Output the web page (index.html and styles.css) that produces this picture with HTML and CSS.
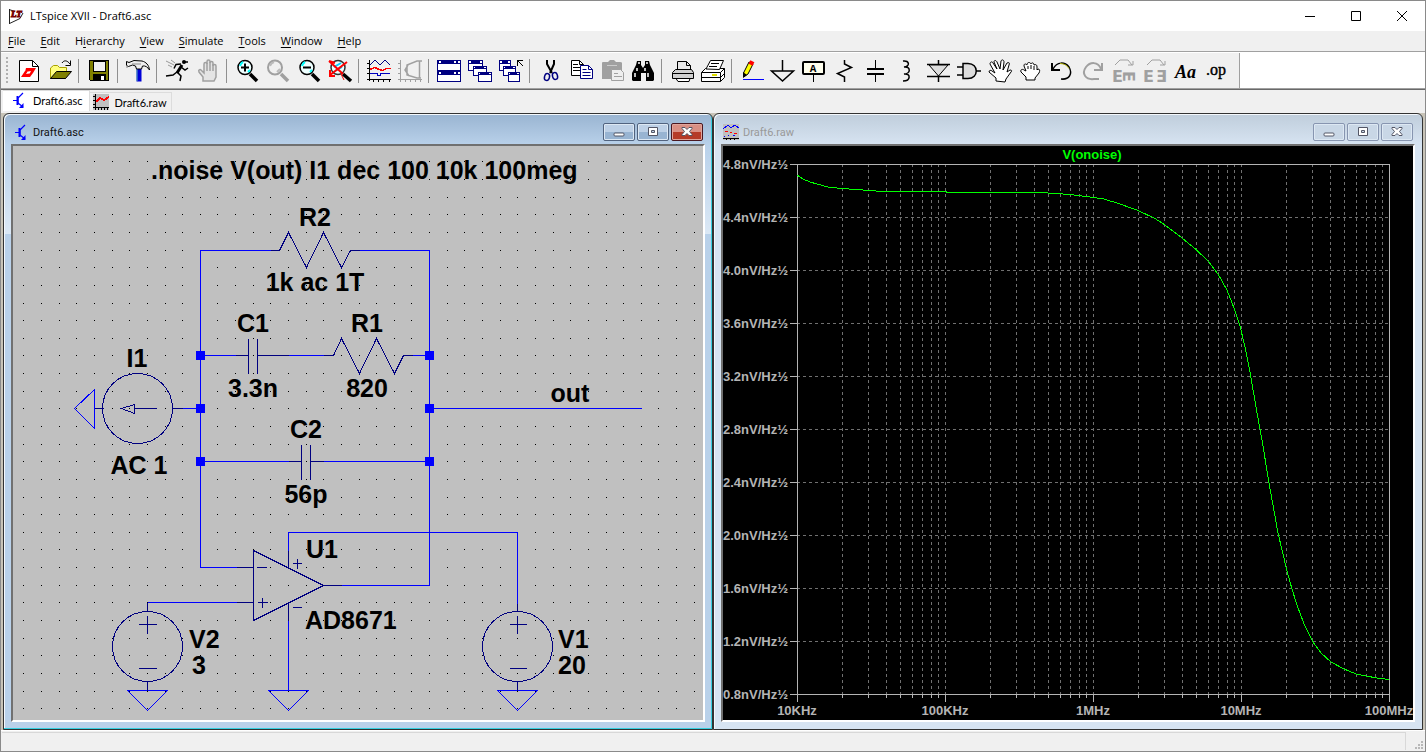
FILE: index.html
```html
<!DOCTYPE html>
<html lang="en">
<head>
    <meta charset="UTF-8">
    <title>LTspice XVII - Draft6.asc</title>
    <link rel="stylesheet" href="styles.css">
</head>
<body>
    <header class="titlebar">
        <svg class="app-icon" width="17" height="17" viewBox="0 0 17 17">
            <path d="M1.500 1v15L13 10.500 16 .5z" fill="#fff"/>
            <path d="M1.500 1v15M1.500 15.500 12 10.500 15 5M1 1.500l6 2" stroke="#222" fill="none"/>
            <text x="3" y="9" class="logo-text">LT</text>
        </svg>
        <h1>LTspice XVII - Draft6.asc</h1>
        <div class="sys-buttons">
            <button aria-label="Minimize"><svg width="10" height="10"><path d="M0 5.500h10" stroke="#000"/></svg></button>
            <button aria-label="Maximize"><svg width="10" height="10"><path d="M.5.5h9v9h-9z" fill="none" stroke="#000"/></svg></button>
            <button aria-label="Close"><svg width="10" height="10"><path d="M0 0l10 10M10 0 0 10" stroke="#000"/></svg></button>
        </div>
    </header>

    <nav class="menubar">
        <button><u>F</u>ile</button>
        <button><u>E</u>dit</button>
        <button>H<u>i</u>erarchy</button>
        <button><u>V</u>iew</button>
        <button><u>S</u>imulate</button>
        <button><u>T</u>ools</button>
        <button><u>W</u>indow</button>
        <button><u>H</u>elp</button>
    </nav>

    <div class="toolbar-row">
        <div class="toolbar">
            <div class="grip"></div>
            <button aria-label="New Schematic"><svg viewBox="0 0 24 24">
                <path d="M2.500 1.500h13l6 6v15h-19z" fill="#fff" stroke="#000"/>
                <path d="M15.500 1.500v6h6" fill="none" stroke="#000"/>
                <path d="M9 9h10l-3 5-4 2 2-4-6 1zM4 18l4-6h3l-2 3 7-1-3 4z" fill="#f00"/>
            </svg></button>
            <button aria-label="Open"><svg viewBox="0 0 24 24">
                <path d="M2.500 19V9l3-2.500h4l2 2h7v4" fill="#ffff80" stroke="#a8a000"/>
                <path d="M2.500 19.500 8.500 12.500h15l-6 7z" fill="#808000" stroke="#000"/>
                <path d="M14 4c2-3 5-3 8 1M22.500 1.500v5h-5" fill="none" stroke="#000"/>
                <path d="M2.500 19.500h15" stroke="#000"/>
            </svg></button>
            <span class="sep"></span>
            <button aria-label="Save"><svg viewBox="0 0 24 24" class="crisp">
                <path d="M2.500 1.500h19v20h-18l-1-1z" fill="#808000" stroke="#000"/>
                <path d="M6 2h12v10H6z" fill="#f0f0f0" stroke="#000"/>
                <path d="M6 15h13v7H6z"/><path d="M14 17h3v4h-3z" fill="#fff"/>
            </svg></button>
            <span class="sep"></span>
            <button aria-label="Control Panel"><svg viewBox="0 0 24 24">
                <path d="M10.500 9h5v13.500h-5z" fill="#0000d8"/><path d="M11 10v12" stroke="#5ab"/>
                <path d="M.5 2.500 3 3.500l5-2 8 .5c4 1 7 4 7.500 9-2-3-4-4.500-7-4l-1 3h-5l-1-3-3-1-4 1.500-2-1z" fill="#eee" stroke="#000"/>
                <path d="M1 6v3M6 5h9" stroke="#888"/>
            </svg></button>
            <span class="sep"></span>
            <button aria-label="Run"><svg viewBox="0 0 24 24">
                <circle cx="19" cy="3" r="2"/>
                <path d="M17 6 12 14" stroke="#000" stroke-width="3" fill="none"/>
                <path d="M16 5l-5 .5-2 4M12 13l-4 3-7 1M12 13l4 4-1 5M16 8l4 3 3-2M19 3h4" stroke="#000" stroke-width="1.500" fill="none"/>
                <path d="M1 2l8 4M3 6l4 2M6 1l4 3" stroke="#999" fill="none"/>
            </svg></button>
            <button aria-label="Halt"><svg viewBox="0 0 24 24">
                <path d="M7 22v-4l-4-5c-1-2 1-3 2-2l3 3V5c0-2 3-2 3 0V2.500c0-2 3-2 3 0V4c0-2 3-2 3 0v3c0-2 3-2 3 0v11l-2 4z" fill="#e4e4e4" stroke="#a0a0a0" stroke-width="1.500"/>
                <path d="M11 4v8M14 3v9M17 5v7" stroke="#a0a0a0" stroke-width="1.500"/>
            </svg></button>
            <span class="sep"></span>
            <button aria-label="Zoom In"><svg viewBox="0 0 24 24">
                <path d="M15 15l7 7" stroke="#000" stroke-width="3.500"/>
                <circle cx="10" cy="8.500" r="7" fill="#eff" stroke="#000" stroke-width="1.500"/>
                <path d="M5 7q1-3 3-4M13 13l2-2" stroke="#0ff" stroke-width="2" fill="none"/>
                <path d="M6 8.500h8M10 4.500v8" stroke="#000" stroke-width="2"/>
            </svg></button>
            <button aria-label="Pan"><svg viewBox="0 0 24 24">
                <path d="M15 15l7 7" stroke="#a0a0a0" stroke-width="3.500"/>
                <circle cx="9" cy="8.500" r="7" fill="none" stroke="#a0a0a0" stroke-width="2"/>
                <path d="M4 7q1-3 4-4M11 13l3-3" stroke="#bbb" stroke-width="2" fill="none"/>
            </svg></button>
            <button aria-label="Zoom Out"><svg viewBox="0 0 24 24">
                <path d="M15 15l7 7" stroke="#000" stroke-width="3.500"/>
                <circle cx="10" cy="8.500" r="7" fill="#eff" stroke="#000" stroke-width="1.500"/>
                <path d="M5 7q1-3 3-4M13 13l2-2" stroke="#0ff" stroke-width="2" fill="none"/>
                <path d="M6 8.500h8" stroke="#000" stroke-width="2"/>
            </svg></button>
            <button aria-label="Zoom to Fit"><svg viewBox="0 0 24 24">
                <path d="M15 15l8 7" stroke="#000" stroke-width="3.500"/>
                <circle cx="10" cy="8.500" r="7" fill="#eff" stroke="#333" stroke-width="1.500"/>
                <path d="M6 8l7-4M7 12l7-4" stroke="#0cf" stroke-width="2"/>
                <path d="M1 2l14 13M1 2l6 2M19 3 2 16M2 11v6h5" stroke="#f00" stroke-width="2" fill="none"/>
                <path d="M13 15l3 6" stroke="#f00"/>
            </svg></button>
            <span class="sep"></span>
            <button aria-label="Autorange"><svg viewBox="0 0 24 24" class="crisp">
                <path d="M2.500 1v21M0 20.500h24M0 4.500h2M0 9.500h2M0 14.500h2M6.500 20v3M11.500 20v3M16.500 20v3M22.500 20v3" stroke="#000"/>
                <path d="M3 6l5-5 5 5 5-5 5 5" fill="none" stroke="#000080"/>
                <path d="M3 10.500l5-2 4 2 4 1 3-2h5" fill="none" stroke="#f00" stroke-width="1.500"/>
                <path d="M3 14.500h7v2h3v-2h10" fill="none" stroke="#0000c0"/>
            </svg></button>
            <button aria-label="Smith Chart"><svg viewBox="0 0 24 24">
                <path d="M2.500 1v22M0 20.500h24M0 4.500h2M0 9.500h2M0 14.500h2M7.500 20v3M12.500 20v3M17.500 20v3M22.500 20v3" stroke="#a0a0a0"/>
                <path d="M21.500 2v17M24 2h-5L9 6v10l10 3h4M10 6l-3 5 4 6" fill="none" stroke="#a0a0a0" stroke-width="1.500"/>
            </svg></button>
            <span class="sep"></span>
            <button aria-label="Tile Windows"><svg viewBox="0 0 24 24" class="crisp">
                <path d="M.5 1.500h23v10H.5zM.5 12.500h23v10H.5z" fill="#fff" stroke="#000080"/>
                <path d="M1 1h23v4H1zM1 12h23v4H1z" fill="#000080"/>
                <path d="M2 2h2v2H2zM17 2h2v2h-2zM21 2h2v2h-2zM2 13h2v2H2zM17 13h2v2h-2zM21 13h2v2h-2z" fill="#fff"/>
            </svg></button>
            <button aria-label="Cascade Windows"><svg viewBox="0 0 24 24" class="crisp">
                <g fill="#fff" stroke="#000080"><path d="M.5 1.500h14v10H.5z"/><path d="M5.500 7.500h13v9h-13z"/><path d="M10.500 13.500h13v9h-13z"/></g>
                <path d="M0 1h15v4H0zM5 7h14v3H5zM10 13h14v3H10z" fill="#000080"/>
                <path d="M1 2h2v2H1zM12 2h2v2h-2zM6 8h1v1H6zM16 8h2v1h-2zM11 14h1v1h-1zM21 14h2v1h-2z" fill="#fff"/>
            </svg></button>
            <button aria-label="Close All"><svg viewBox="0 0 24 24" class="crisp">
                <g fill="#fff" stroke="#000080"><path d="M.5 1.500h11v10H.5z"/><path d="M4.500 7.500h12v9h-12z"/><path d="M9.500 13.500h11v9h-11z"/></g>
                <path d="M0 1h12v4H0zM4 7h13v3H4zM9 13h12v3H9z" fill="#000080"/>
                <path d="M1 2h2v2H1zM9 2h2v2H9zM5 8h1v1H5zM14 8h2v1h-2zM10 14h1v1h-1zM18 14h2v1h-2z" fill="#fff"/>
                <path d="M18.500 7V1.500H24M19 2l5 5" stroke="#000" fill="none"/>
            </svg></button>
            <span class="sep"></span>
            <button aria-label="Cut"><svg viewBox="0 0 24 24">
                <path d="M9 1v4l5 9M16 1v4l-4 9" stroke="#000" stroke-width="2" fill="none"/>
                <ellipse cx="9" cy="18" rx="2.500" ry="3.500" fill="none" stroke="#000080" stroke-width="1.500" transform="rotate(15 9 18)"/>
                <ellipse cx="17" cy="17" rx="2.500" ry="3.500" fill="none" stroke="#000080" stroke-width="1.500" transform="rotate(-15 17 17)"/>
            </svg></button>
            <button aria-label="Copy"><svg viewBox="0 0 24 24">
                <path d="M2.500 1.500h8l4 4v11h-12z" fill="#fff" stroke="#000"/>
                <path d="M4 5.500h5M4 8.500h7M4 11.500h7M10.500 1.500v4h4" stroke="#000" fill="none"/>
                <path d="M11.500 6.500h8l4 4v9h-12z" fill="#fff" stroke="#000080"/>
                <path d="M13.500 10.500h4M13.500 13.500h8M13.500 16.500h8M19.500 6.500v4h4" stroke="#000080" fill="none"/>
            </svg></button>
            <button aria-label="Paste"><svg viewBox="0 0 24 24">
                <path d="M2 4q0-1 1-1h5l2-2h4l2 2h4q2 0 2 1v16H2z" fill="#a0a0a0"/>
                <path d="M7 6.500h10" stroke="#ccc"/>
                <path d="M11.500 10.500h9l3 3v8h-12z" fill="#eee" stroke="#a0a0a0"/>
                <path d="M14 14.500h4M14 17.500h8" stroke="#a0a0a0"/>
            </svg></button>
            <button aria-label="Find"><svg viewBox="0 0 24 24">
                <path d="M6 2h4v4l2 3 2-3V2h4l1 4 4 8v7l-1 1h-7v-8h-5v8H2l-1-1v-7l4-8z"/>
                <path d="M7 4h2M15 4h2M6 9v3M14 9v3M4 14v4M17 14v4" stroke="#fff" stroke-width="1.500"/>
            </svg></button>
            <span class="sep"></span>
            <button aria-label="Print"><svg viewBox="0 0 24 24">
                <path d="M7.500 11V2.500h9l4 4V11" fill="#e8e8e8" stroke="#000"/>
                <path d="M16.500 2.500v4h4" fill="none" stroke="#000"/>
                <path d="M2.500 13.500l3-3h16l2 3v6h-21z" fill="#d0d0d0" stroke="#000"/>
                <path d="M2.500 14.500h21M8 22.500h11l1-3H6z" stroke="#000" fill="#fff"/>
            </svg></button>
            <button aria-label="Print Setup"><svg viewBox="0 0 24 24">
                <path d="M.5 13.500l4-4h19v9l-4 4H.5z" fill="#fff" stroke="#000"/>
                <path d="M5 10 9.500 1.500h13l-4 9z" fill="#fff" stroke="#000"/>
                <path d="M10 4.500h8M8 7.500h8M.5 13.500h19v9M.5 18.500h19l4-4M19.500 13.500l4-4" stroke="#000" fill="none"/>
                <path d="M11 16h5" stroke="#dd0" stroke-width="2"/>
            </svg></button>
            <span class="sep"></span>
            <button aria-label="Draw Wire"><svg viewBox="0 0 24 24">
                <path d="M3.500 18V14L9 3l4 2-5 10z" fill="#ff0" stroke="#000"/>
                <path d="M9.500 3l4 2" stroke="#f00" stroke-width="4"/>
                <path d="M3 13l4 3-4 3z"/><path d="M3 20.500h21" stroke="#00f"/>
            </svg></button>
            <button aria-label="Ground"><svg viewBox="0 0 24 24">
                <path d="M11.500 1v11M.5 12h22L11.500 22z" fill="none" stroke="#000" stroke-width="1.500"/>
            </svg></button>
            <button aria-label="Label Net"><svg viewBox="0 0 24 24">
                <rect x="1" y="3" width="21" height="12" rx="1" fill="#ffe" stroke="#000" stroke-width="2"/>
                <path d="M11.500 16v7" stroke="#000"/>
                <text x="11" y="13" text-anchor="middle" class="icon-label">A</text>
            </svg></button>
            <button aria-label="Resistor"><svg viewBox="0 0 24 24">
                <path d="M11.500 1v4l7 3.500-14 6 7 3.500v5" fill="none" stroke="#000" stroke-width="1.500"/>
            </svg></button>
            <button aria-label="Capacitor"><svg viewBox="0 0 24 24" class="crisp">
                <path d="M11.500 1v8M11.500 15v8" stroke="#000"/><path d="M3 10h17M3 15h17" stroke="#000" stroke-width="2"/>
            </svg></button>
            <button aria-label="Inductor"><svg viewBox="0 0 24 24">
                <path d="M8 2c7-1 7 6 1 6 7-1 7 7 0 7 7-1 7 7-1 7" fill="none" stroke="#000" stroke-width="1.500"/>
            </svg></button>
            <button aria-label="Diode"><svg viewBox="0 0 24 24">
                <path d="M12.500 1v22M1 5.500h23M1 17.500h23" stroke="#000" stroke-width="1.500"/>
                <path d="M3 6h19l-9.500 11z" fill="#ddd" stroke="#000"/>
            </svg></button>
            <button aria-label="Component"><svg viewBox="0 0 24 24">
                <path d="M6 4.500h5c11 0 11 15 0 15H6z" fill="#ddd" stroke="#000" stroke-width="1.500"/>
                <path d="M0 8h6M0 16h6M19 12h5" stroke="#000" stroke-width="1.500"/>
            </svg></button>
            <button aria-label="Move"><svg viewBox="0 0 24 24">
                <path d="M8 22v-3l-7-6c0-2 2-2 3-1l3 2L2 5c0-2 2-3 3-1l4 6L6 3c0-2 2-2 3 0l3 7 1-8c1-2 3-1 3 1l-1 8 4-7c2-1 3 0 2 2l-2 7 3-2c2 0 2 1 1 2l-5 7-1 3z" fill="#fff" stroke="#000"/>
            </svg></button>
            <button aria-label="Drag"><svg viewBox="0 0 24 24">
                <path d="M7 21v-3l-5-5c-1-3 2-3 3-2l2 1-2-5c0-3 2-2 3-1V5c1-2 3-2 4 0 1-2 3-1 3 1 2-1 3 0 3 2v3l1-1c2 0 2 2 1 4l-4 5v2z" fill="#fff" stroke="#000"/>
                <path d="M9 7v3M12 6v4M15 7v4" stroke="#000"/>
            </svg></button>
            <button aria-label="Undo"><svg viewBox="0 0 24 24">
                <path d="M3 10c4-8 12-7 16-2 4 7 0 13-8 12" fill="none" stroke="#000" stroke-width="1.500"/>
                <path d="M10 4.500q6 0 9 5" fill="none" stroke="#aa0"/><path d="M2 4v7h8" fill="none" stroke="#000" stroke-width="2"/>
            </svg></button>
            <button aria-label="Redo"><svg viewBox="0 0 24 24">
                <path d="M20 10c-3-8-11-7-15-2-5 7 0 13 8 12h5" fill="none" stroke="#a0a0a0" stroke-width="2"/>
                <path d="M21 4v7h-8" fill="none" stroke="#a0a0a0" stroke-width="2"/>
            </svg></button>
            <button aria-label="Rotate"><svg viewBox="0 0 24 24">
                <path d="M3 6l5-5h8l4 5M21 2v4h-5" fill="none" stroke="#a0a0a0"/>
                <text x="0" y="23" class="icon-e">E</text>
                <text x="12" y="-11" transform="rotate(90)" class="icon-e">E</text>
            </svg></button>
            <button aria-label="Mirror"><svg viewBox="0 0 24 24">
                <path d="M4 6l5-5h8l4 5M22 2v4h-5" fill="none" stroke="#a0a0a0"/>
                <text x="0" y="23" class="icon-e">E</text>
                <text x="13" y="23" class="icon-e">Ǝ</text>
            </svg></button>
            <button aria-label="Text"><svg viewBox="0 0 24 24"><text x="1" y="19" class="icon-aa">Aa</text></svg></button>
            <button aria-label="SPICE Directive"><svg viewBox="0 0 24 24"><text x="1" y="16" class="icon-op">.op</text></svg></button>
        </div>
    </div>

    <div class="tabs">
        <button class="tab active">
            <svg width="16" height="17" viewBox="0 0 16 17"><use href="#transistor"/></svg>
            <span>Draft6.asc</span>
        </button>
        <button class="tab">
            <svg width="16" height="16" viewBox="0 0 16 16" class="crisp">
                <path d="M0 0h16v16H0z" fill="#c0c0c0"/>
                <path d="M2.500 0v16M0 13.500h16M0 2.500h2M0 6.500h2M0 10.500h2M5.500 13v3M8.500 13v3M11.500 13v3M14.500 13v3" stroke="#000"/>
                <path d="M3 8l4-4 4 2 5-3" stroke="#f00" stroke-width="2" fill="none"/>
            </svg>
            <span>Draft6.raw</span>
        </button>
    </div>

    <main class="mdi">
        <section class="window active">
            <div class="caption">
                <svg width="16" height="17" viewBox="0 0 16 17">
                    <g id="transistor" stroke="#00f" fill="none">
                        <path d="M2 8.500h4M12 1 7 6v5l5 4" stroke-width="1.200"/><path d="M6.500 4v9" stroke-width="2"/><path d="M12.500 11v5H8z" fill="#00f" stroke="none"/>
                    </g>
                </svg>
                <h2>Draft6.asc</h2>
                <button aria-label="Minimize"><svg width="12" height="12"><rect x="1" y="7" width="10" height="3" rx="1" class="glyph"/></svg></button>
                <button aria-label="Maximize"><svg width="12" height="12"><path d="M1.500 1.500h9v8h-9zM4.500 4.500v2h3v-2z" class="glyph"/></svg></button>
                <button class="close" aria-label="Close"><svg width="12" height="12"><path d="M1 1.500h3l2 2 2-2h3v1L8.500 5.500 11 8.500v1H8l-2-2-2 2H1v-1l2.500-3L1 2.500z" class="glyph"/></svg></button>
            </div>
            <div class="client schematic">
                <svg class="sheet" viewBox="13 146 691 574">
                    <g id="dots"></g>
                    <g class="wire" transform="translate(.5 .5)">
                        <path d="M270 250H200V567H236M359 250H429V585H341M200 355H235M288 355H323M412 355H429"/>
                        <path d="M182 408H200M200 461H288M323 461H429M429 408H641"/>
                        <path d="M288 550V532H517V603M147 602H236M288 620V690"/>
                        <path d="M94 389V428L74 408z"/>
                        <path d="M127 690H167L147 710z"/>
                        <path d="M268 690H308L288 710z"/>
                        <path d="M497 690H537L517 710z"/>
                    </g>
                    <g class="part" transform="translate(.5 .5)">
                        <!-- R2, R1 -->
                        <path d="M270 250H279L288 232 306 267 323 232 341 267 350 250H359"/>
                        <path d="M323 355H333L341 338 359 373 376 338 394 373 403 355H412"/>
                        <!-- C1, C2 -->
                        <path d="M235 355H248M248 338V373M257 338V373M257 355H288"/>
                        <path d="M288 461H301M301 444V479M310 444V479M310 461H323"/>
                        <!-- I1 -->
                        <circle cx="137" cy="408" r="35"/>
                        <path d="M94 408H103M172 408H182M156 408H134M134 404V413L121 408z"/>
                        <!-- U1 -->
                        <path d="M253 550V620L323 585zM236 567H253M236 602H253M323 585H341M288 550V567M288 602V620"/>
                        <path d="M256 567H266M257 602H267M262 597V607M292 563H301M297 558V568M292 607H301"/>
                        <!-- V2, V1 -->
                        <circle cx="147" cy="646" r="35"/>
                        <path d="M147 602V611M147 681V690M138 624H156M147 615V633M138 668H156"/>
                        <circle cx="517" cy="646" r="35"/>
                        <path d="M517 603V611M517 681V690M509 624H526M517 615V633M509 668H526"/>
                    </g>
                    <g class="node">
                        <rect x="196" y="351"/><rect x="196" y="404"/><rect x="196" y="457"/>
                        <rect x="425" y="351"/><rect x="425" y="404"/><rect x="425" y="457"/>
                    </g>
                    <g class="label">
                        <text x="151" y="179">.noise V(out) I1 dec 100 10k 100meg</text>
                        <text x="306" y="558">U1</text>
                        <text x="305" y="629">AD8671</text>
                        <text x="189" y="648">V2</text>
                        <text x="192" y="674">3</text>
                        <text x="558" y="648">V1</text>
                        <text x="558" y="674">20</text>
                    </g>
                    <g class="label centered">
                        <text x="315" y="226">R2</text>
                        <text x="315" y="291">1k ac 1T</text>
                        <text x="253" y="332">C1</text>
                        <text x="253" y="397">3.3n</text>
                        <text x="367" y="332">R1</text>
                        <text x="367" y="397">820</text>
                        <text x="137" y="367">I1</text>
                        <text x="139" y="474">AC 1</text>
                        <text x="570" y="402">out</text>
                        <text x="306" y="438">C2</text>
                        <text x="306" y="503">56p</text>
                    </g>
                </svg>
            </div>
        </section>

        <section class="window">
            <div class="caption">
                <svg width="16" height="16" viewBox="0 0 16 16" class="crisp">
                    <path d="M0 0h16v16H0z" fill="#c0c0c0"/>
                    <path d="M0 5l5-4 3 3 4-3 4 3" stroke="#00f" fill="none"/>
                    <path d="M2 7.500h3M7 8.500h2M11 9.500h3" stroke="#f00"/>
                    <path d="M5 11.500h1M10 11.500h2M1 12.500h1" stroke="#00f"/>
                    <path d="M0 14.500h16M3.500 14v2M7.500 14v2M11.500 14v2" stroke="#000"/>
                </svg>
                <h2>Draft6.raw</h2>
                <button aria-label="Minimize"><svg width="12" height="12"><rect x="1" y="7" width="10" height="3" rx="1" class="glyph"/></svg></button>
                <button aria-label="Maximize"><svg width="12" height="12"><path d="M1.500 1.500h9v8h-9zM4.500 4.500v2h3v-2z" class="glyph"/></svg></button>
                <button aria-label="Close"><svg width="12" height="12"><path d="M1 1.500h3l2 2 2-2h3v1L8.500 5.500 11 8.500v1H8l-2-2-2 2H1v-1l2.500-3L1 2.500z" class="glyph"/></svg></button>
            </div>
            <div class="client plot">
                <svg class="sheet" viewBox="723 146 691 574">
                    <g id="grid"></g>
                    <text x="1092" y="159" class="trace-name">V(onoise)</text>
                    <path class="trace" d="M797 175L803 179 810 182 817 184 828 187 842 188.500 855 189.500 870 190.500 882 191.500H945L948 192.500H1040L1055 193.500 1070 194.500 1086 196.500 1104 199 1120 204 1138 210.500 1155 218.500 1165 225 1182 238 1196 249.500 1208 261 1218 274 1227 290 1234 308 1240 326 1245 347 1250 372 1256 407 1262 440 1269 483 1278 533 1287 571 1292 589 1297 605 1304 624 1313 642 1321 653 1331 662 1344 669 1356 674 1366 676 1377 678 1389 679.500"/>
                </svg>
            </div>
        </section>
    </main>

    <footer class="statusbar">
        <span class="pane"></span>
        <svg width="10" height="10" class="crisp"><path d="M7 1h2v2H7zM4 4h2v2H4zM7 4h2v2H7zM1 7h2v2H1zM4 7h2v2H4zM7 7h2v2H7z" fill="#b8b8b8"/></svg>
    </footer>

    <script src="script.js"></script>
</body>
</html>
```

FILE: styles.css
```css
* {
    box-sizing: border-box;
}

body {
    margin: 0;
    min-height: 100vh;
    display: flex;
    flex-direction: column;
    border: 1px solid #8a8a8a;
    background: #f0f0f0;
    color: #000;
    font-family: "Open Sans", "Noto Sans", sans-serif;
    font-size: 11px;
}

button {
    border: none;
    padding: 0;
    background: none;
    color: inherit;
    font: inherit;
}

h1, h2 {
    margin: 0;
    font-weight: normal;
    font-size: 11px;
}

.crisp {
    shape-rendering: crispEdges;
}

/* title bar */
.titlebar {
    display: flex;
    align-items: center;
    height: 30px;
    padding-left: 7px;
    background: #fff;
}

.titlebar h1 {
    flex: 1;
    margin-left: 5px;
    padding-bottom: 2px;
}

.logo-text {
    font: italic bold 9px "Liberation Serif", serif;
    fill: #700;
    stroke: #700;
}

.sys-buttons {
    display: flex;
}

.sys-buttons button {
    width: 46px;
    height: 30px;
}

/* menu */
.menubar {
    display: flex;
    gap: 15px;
    height: 20px;
    padding: 0 7px 2px;
}

.menubar u {
    text-underline-offset: 2px;
}

/* toolbar */
.toolbar-row {
    display: flex;
    height: 38px;
    padding-top: 1px;
    border-top: 1px solid #a0a0a0;
    border-bottom: 1px solid #a0a0a0;
    background: #fff;
}

.toolbar {
    display: flex;
    align-items: center;
    padding-right: 7px;
    border-right: 1px solid #a0a0a0;
    background: #f0f0f0;
}

.toolbar button {
    display: flex;
    width: 31px;
    height: 24px;
    padding-left: 4px;
}

.toolbar button svg {
    width: 24px;
    height: 24px;
    overflow: visible;
}

.grip {
    width: 2px;
    height: 28px;
    margin: 0 5px;
    background: repeating-linear-gradient(#b0b0b0 0 2px, #f0f0f0 2px 4px);
}

.sep {
    width: 1px;
    height: 24px;
    margin: 0 4px 0 3px;
    background: #909090;
}

.icon-label {
    font: bold 11px "Liberation Mono", monospace;
}

.icon-e {
    font: bold 16px "DejaVu Sans", sans-serif;
    fill: #a0a0a0;
}

.icon-aa {
    font: italic bold 18px "Liberation Serif", serif;
}

.icon-op {
    font: 16px "Liberation Serif", serif;
    stroke: #000;
    stroke-width: 0.4px;
}

/* document tabs */
.tabs {
    display: flex;
    align-items: flex-end;
    height: 24px;
    padding: 0 2px 2px;
    border-top: 1px solid #696969;
}

.tab {
    display: flex;
    align-items: center;
    gap: 6px;
    height: 19px;
    padding: 0 4px 0 3px;
    border: 1px solid #dcdcdc;
    border-width: 1px 1px 0 0;
    font: 11px Lato, sans-serif;
}

.tab.active {
    height: 21px;
    padding: 0 6px 2px 8px;
    background: #fff;
}

/* mdi windows */
.mdi {
    flex: 1;
    display: grid;
    grid-template-columns: 1fr 1fr;
    padding: 0 2px;
    background: #c8c4b8;
}

.window {
    display: flex;
    flex-direction: column;
    min-width: 0;
    padding: 0 7px 7px;
    border: 1px solid #333;
    border-radius: 6px 6px 0 0;
    background: linear-gradient(#bfcddb 0, #d7e4f2 31px);
    box-shadow: inset 1px 1px #f4f8fc;
}

.window.active {
    background: linear-gradient(#99b4d1 0, #b9d1ea 31px, #dbe8f5 120px, #b9d1ea 120px);
    box-shadow: inset -1px -1px #35cfe0, inset 1px 1px #f4f8fc;
}

.caption {
    display: flex;
    align-items: center;
    gap: 2px;
    height: 30px;
    padding: 6px 2px 0;
}

.caption h2 {
    flex: 1;
    margin-left: 2px;
    color: #999;
    font: 11px Roboto, sans-serif;
}

.active .caption h2 {
    color: #111;
}

.caption button {
    display: flex;
    align-items: center;
    justify-content: center;
    width: 32px;
    height: 18px;
    border: 1px solid #8795b0;
    border-radius: 2px;
    background: #c9d7e6;
    box-shadow: inset 0 0 0 1px #dde8f3;
}

.active .caption button {
    border-color: #51637f;
    background: linear-gradient(#bdd0e6 50%, #98b4d2 50%);
}

.active .caption .close {
    border-color: #4a1720;
    background: linear-gradient(#d98f84 50%, #b53a28 50%);
    box-shadow: inset 0 0 0 1px #e0a59c;
}

.glyph {
    fill: #fff;
    fill-rule: evenodd;
    stroke: #535666;
}

.client {
    flex: 1;
    overflow: hidden;
    border: 2px solid;
    border-color: #707070 #fff #fff #707070;
}

.sheet {
    display: block;
    width: 691px;
    height: 574px;
}

.schematic {
    background: #c0c0c0;
}

.dot {
    fill: #000;
    shape-rendering: crispEdges;
}

.wire, .part {
    fill: none;
    stroke: #00f;
    shape-rendering: crispEdges;
}

.part {
    stroke: #000080;
}

.node rect {
    width: 9px;
    height: 9px;
    fill: #00f;
}

.label {
    font: bold 25px "Liberation Sans", Arial, sans-serif;
}

.centered {
    text-anchor: middle;
}

/* waveform */
.plot {
    background: #000;
}

.axis {
    fill: none;
    stroke: #b4b4b4;
    shape-rendering: crispEdges;
}

.gridline {
    stroke: #707070;
    stroke-dasharray: 3 3;
    shape-rendering: crispEdges;
}

.tick-text, .trace-name {
    font: bold 13px "Liberation Sans", Arial, sans-serif;
    fill: #b4b4b4;
}

.x-tick, .trace-name {
    text-anchor: middle;
}

.trace-name {
    fill: #0f0;
}

.trace {
    fill: none;
    stroke: #0f0;
    shape-rendering: crispEdges;
}

/* status bar */
.statusbar {
    display: flex;
    align-items: flex-end;
    height: 21px;
    padding: 1px;
    border-top: 1px solid #fff;
}

.pane {
    flex: 1;
    height: 18px;
    margin-right: 8px;
    border: 1px solid #d8d8d8;
    border-width: 1px 1px 0 0;
}
```

FILE: script.js
```js
const NS = 'http://www.w3.org/2000/svg';

function add(parent, tag, attrs, text) {
    const el = document.createElementNS(NS, tag);
    for (const key in attrs) el.setAttribute(key, attrs[key]);
    if (text) el.textContent = text;
    parent.appendChild(el);
}

// schematic grid
const dots = document.getElementById('dots');
for (let row = 0; row < 32; row++) {
    for (let col = 0; col < 39; col++) {
        add(dots, 'rect', {
            class: 'dot',
            x: Math.round(23.4 + col * 17.64),
            y: Math.round(161.4 + row * 17.64),
            width: 1,
            height: 1
        });
    }
}

// plot grid, 4 decades wide and 10 divisions high
const grid = document.getElementById('grid');
const left = 797, right = 1389, top_ = 164, bottom = 694;
const decade = 148, division = 53;

for (let i = 0; i <= 10; i++) {
    const y = top_ + i * division + 0.5;
    if (i > 0 && i < 10) {
        add(grid, 'path', { class: 'gridline', d: `M${left} ${y}H${right}` });
    }
    add(grid, 'path', { class: 'axis', d: `M790 ${y}H${left}` });
    add(grid, 'text', { class: 'tick-text', x: 723, y: y + 4.5 }, (4.8 - i * 0.4).toFixed(1) + 'nV/Hz½');
}

const freqs = ['10KHz', '100KHz', '1MHz', '10MHz', '100MHz'];
freqs.forEach((name, d) => {
    const start = left + d * decade;
    add(grid, 'path', { class: 'axis', d: `M${start + 0.5} ${bottom}v8` });
    add(grid, 'text', { class: 'tick-text x-tick', x: start, y: 715 }, name);
    if (d === 4) return;
    for (let n = 1; n < 10; n++) {
        const x = Math.round(start + Math.log10(n) * decade) + 0.5;
        if (n > 1 || d > 0) {
            add(grid, 'path', { class: 'gridline', d: `M${x} ${top_}V${bottom}` });
        }
        add(grid, 'path', { class: 'axis', d: `M${x} ${bottom}v4` });
    }
});
add(grid, 'path', { class: 'axis', d: `M${left + 0.5} ${top_ + 0.5}H${right + 0.5}V${bottom + 0.5}H${left + 0.5}z` });
```
